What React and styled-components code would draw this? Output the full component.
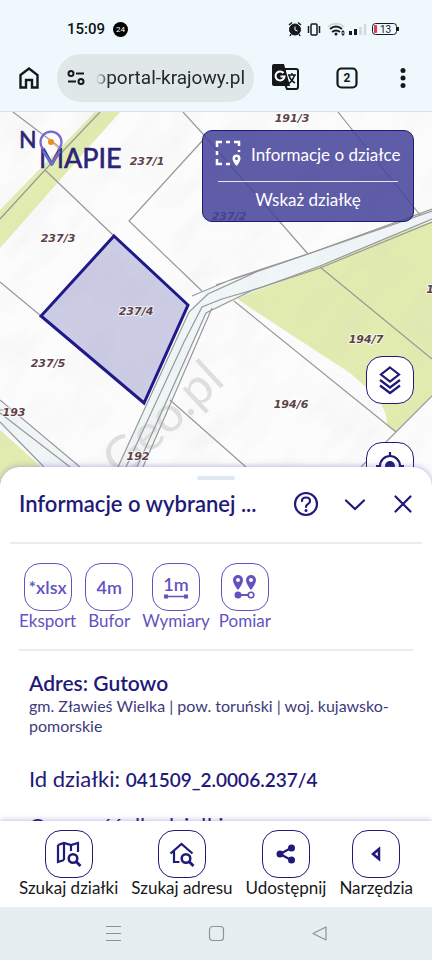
import styled, { createGlobalStyle } from "styled-components";

const NAVY = "#1f1a78";
const VIOLET = "#6253c0";

const GlobalStyle = createGlobalStyle`
  * {
    box-sizing: border-box;
  }
  body {
    margin: 0;
    background: #fff;
    color: ${NAVY};
    font-family: Lato, "Noto Sans", sans-serif;
  }
  button {
    font: inherit;
    color: inherit;
    padding: 0;
    border: none;
    background: none;
    cursor: pointer;
  }
  h1, h2, p {
    margin: 0;
  }
  svg {
    display: block;
  }
`;

const Screen = styled.div`
  display: flex;
  flex-direction: column;
  height: 100vh;
  overflow: hidden;
`;

const StatusBar = styled.div`
  display: flex;
  align-items: center;
  justify-content: space-between;
  height: 52px;
  padding: 6px 32px 0 67px;
  background: #eff9fd;
  color: #111;
`;

const StatusGroup = styled.div`
  display: flex;
  align-items: center;
  gap: 8px;
`;

const Clock = styled.time`
  font-family: Roboto, sans-serif;
  font-size: 15px;
  font-weight: 500;
`;

const Notification = styled.span`
  width: 15px;
  border-radius: 50%;
  background: #000;
  color: #fff;
  font-family: Roboto, sans-serif;
  font-size: 8px;
  line-height: 15px;
  text-align: center;
`;

const BrowserBar = styled.header`
  display: flex;
  align-items: center;
  height: 60px;
  padding: 0 20px 8px 18px;
  border-bottom: 1px solid #d3e3e8;
  background: #eff9fd;
  color: #14181a;
`;

const BrowserButton = styled.button`
  display: grid;
  place-items: center;
  flex: none;
`;

const AddressBar = styled.div`
  display: flex;
  align-items: center;
  flex: 1;
  gap: 8px;
  min-width: 0;
  height: 48px;
  margin: 0 18px 0 17px;
  padding: 0 9px 0 10px;
  border-radius: 24px;
  background: #e0e7e9;
`;

const AddressClip = styled.label`
  display: flex;
  flex: 1;
  min-width: 0;
  mask-image: linear-gradient(90deg, transparent 3px, #000 16px);
`;

const AddressInput = styled.input`
  flex: 1;
  min-width: 0;
  padding: 0;
  border: none;
  outline: none;
  background: none;
  color: #25292b;
  font-family: Roboto, sans-serif;
  font-size: 19px;
  line-height: 24px;
  text-align: right;
`;

const BrowserActions = styled.div`
  display: flex;
  align-items: center;
  gap: 36px;
`;

const Viewport = styled.main`
  display: grid;
  flex: 1;
  grid-template-rows: minmax(0, 1fr) minmax(0, 1fr);
  grid-template-columns: minmax(0, 1fr);
  min-height: 0;
  overflow: hidden;
`;

const MapCanvas = styled.svg`
  grid-area: 1 / 1 / 3 / 2;
  width: 100%;
  height: 100%;
`;

const MapLabel = styled.text`
  fill: #5e4148;
  stroke: #fff;
  stroke-width: 2px;
  stroke-opacity: 0.7;
  paint-order: stroke;
  font-family: "DejaVu Sans", sans-serif;
  font-size: 11px;
  font-style: italic;
  font-weight: bold;
  text-anchor: middle;
`;

const MapOverlay = styled.div`
  z-index: 1;
  display: flex;
  grid-area: 1 / 1 / 2 / 2;
  align-items: flex-start;
  justify-content: space-between;
  padding: 18px 18px 0;
`;

const OverlayRight = styled.div`
  display: flex;
  flex-direction: column;
  align-items: flex-end;
`;

const ModeCard = styled.section`
  width: 212px;
  padding: 7px 9px 11px 12px;
  border: 1px solid ${NAVY};
  border-radius: 10px;
  background: rgba(69, 65, 154, 0.86);
  color: #fff;
  font-size: 17px;
  text-align: center;
  white-space: nowrap;
`;

const ModeTitle = styled.div`
  display: flex;
  align-items: center;
  gap: 8px;
  height: 32px;
`;

const ModeHint = styled.p`
  margin: 11px 6px 0 3px;
  padding-top: 8px;
  border-top: 1px solid #e6e4f4;
  line-height: 20px;
`;

const MapButtons = styled.div`
  display: flex;
  flex-direction: column;
  gap: 38px;
  margin-top: 134px;
`;

const IconBox = styled.span`
  display: grid;
  place-items: center;
  width: 48px;
  height: 48px;
  border: 1px solid currentColor;
  border-radius: 16px;
  background: #fff;
  font-size: 18px;
  font-weight: 600;
`;

const Sheet = styled.section`
  z-index: 2;
  grid-area: 2 / 1 / 3 / 2;
  overflow: hidden;
  border-radius: 20px 20px 0 0;
  background: #fff;
  box-shadow: 0 0 6px rgba(98, 83, 192, 0.5);
`;

const Handle = styled.div`
  width: 38px;
  height: 4px;
  margin: 9px auto 0;
  border-radius: 2px;
  background: #dfe8f0;
`;

const SheetHeader = styled.header`
  display: flex;
  align-items: center;
  justify-content: space-between;
  height: 64px;
  margin: 0 10px;
  padding: 0 7px 14px 9px;
  border-bottom: 2px solid #ececf0;
`;

const SheetTitle = styled.h1`
  font-size: 22px;
  font-weight: 600;
  line-height: 28px;
  white-space: nowrap;
`;

const HeaderActions = styled.div`
  display: flex;
  align-items: center;
  gap: 24px;
`;

const Toolbar = styled.div`
  display: flex;
  gap: 9px;
  margin: 0 19px;
  padding: 19px 0 18px;
  border-bottom: 2px solid #ececf0;
  color: ${VIOLET};
`;

const Tool = styled.button`
  display: flex;
  flex-direction: column;
  align-items: center;
  font-size: 17px;
  line-height: 20px;
  white-space: nowrap;
`;

const Details = styled.div`
  padding: 19px 29px 0;
`;

const Address = styled.h2`
  font-size: 21px;
  font-weight: 600;
  line-height: 26px;
`;

const Region = styled.p`
  color: #3e3a7c;
  font-size: 16px;
  line-height: 20px;
`;

const DetailRow = styled.p`
  margin-top: 29px;
  font-size: 22px;
  line-height: 28px;
  white-space: nowrap;

  strong {
    font-size: 19px;
    font-weight: 600;
  }

  & + & {
    margin-top: 18px;
  }
`;

const BottomNav = styled.nav`
  z-index: 3;
  display: flex;
  justify-content: space-between;
  height: 86px;
  padding: 9px 19px 0;
  background: #fff;
  box-shadow: 0 0 6px rgba(98, 83, 192, 0.5);
`;

const NavItem = styled(Tool)`
  color: #18181c;

  ${IconBox} {
    color: ${NAVY};
  }
`;

const SystemBar = styled.footer`
  z-index: 3;
  display: flex;
  align-items: center;
  justify-content: center;
  gap: 86px;
  height: 53px;
  background: #e5eef1;
  color: #8c9497;
`;

const parcelLabels = [
  ["191/3", 292, 122],
  ["237/1", 147, 165],
  ["237/2", 229, 220],
  ["237/3", 58, 242],
  ["237/4", 136, 315],
  ["237/5", 48, 367],
  ["194/7", 366, 343],
  ["194/6", 291, 408],
  ["193", 14, 416],
  ["192", 138, 460],
  ["1", 430, 293],
];

function ParcelMap() {
  return (
    <MapCanvas viewBox="0 112 432 709" preserveAspectRatio="xMidYMin slice" role="img" aria-label="Mapa działek">
      <defs>
        <filter id="terrain" x="0" y="0" width="100%" height="100%">
          <feTurbulence type="fractalNoise" baseFrequency="0.016 0.04" numOctaves="3" seed="4" />
          <feColorMatrix values="0 0 0 0 0.5  0 0 0 0 0.5  0 0 0 0 0.52  0.5 0 0 0 -0.2" />
        </filter>
      </defs>
      <rect y="112" width="432" height="709" fill="#fcfcfc" />
      <g fill="#e2ecb0">
        <path d="M95 112H120L0 248V210Z" />
        <path d="M0 430L45 470V500H0Z" />
        <path d="M236 298Q250 286 270 280L432 221V396L396 432L387 426Q388 412 376 396L350 373L246 305Z" />
      </g>
      <path
        d="M118 467L190 310L205 291L308 254L432 209V219L320 266L225 303L207 313L143 467Z"
        fill="#f0f6f8"
      />
      <path d="M0 402L78 467H44L0 426Z" fill="#f0f6f8" />
      <rect x="-300" y="0" width="1100" height="900" filter="url(#terrain)" opacity="0.4" transform="rotate(-48 216 300)" />
      <text
        x="122"
        y="480"
        transform="rotate(-43 122 480)"
        fill="#dedede"
        fontFamily="Lato, sans-serif"
        fontSize="50"
      >
        Geo.pl
      </text>
      <g fill="none" stroke="#989898" strokeWidth="1.2">
        <path d="M13 112L62 149M100 112L45 170L0 219M45 170L114 236M0 282L41 316" />
        <path d="M183 112L203 134L308 254M203 140L129 221L202 291M338 112L420 215" />
        <path d="M192 296L235 278L308 254L432 209M216 285L258 271M320 267L432 359" />
        <path d="M118 467L189 312L208 294L256 272L432 211" />
        <path d="M126 467L184 342L202 307L222 299L260 288L320 266L432 219" />
        <path d="M137 467L206 313L253 290L320 268L432 222M143 467L212 308" />
        <path d="M170 400L246 467M234 301L396 432M432 396L361 467" />
        <path d="M0 400L80 467M0 413L70 467M0 422L44 467M0 410L8 410" />
      </g>
      <path d="M114 236L188 305L144 403L41 316Z" fill="#3b35a0" fillOpacity="0.24" stroke="#20198a" strokeWidth="3" />
      {parcelLabels.map(([name, x, y]) => (
        <MapLabel key={name} x={x} y={y}>
          {name}
        </MapLabel>
      ))}
    </MapCanvas>
  );
}

function Logo() {
  return (
    <svg width="112" height="44" viewBox="0 0 112 44" role="img" aria-label="No mapie">
      <g fill="#2a2479" stroke="#2a2479" strokeWidth="0.6" fontFamily="Lato, sans-serif">
        <text x="1" y="18" fontSize="23">N</text>
        <text x="21" y="38" fontSize="27">MAPIE</text>
      </g>
      <path d="M26 20A10.500 10.500 0 1 1 40 20" fill="none" stroke="#7568cf" strokeWidth="2.200" />
      <path d="M25 21L33.500 34L42 21" fill="none" stroke="#7568cf" strokeWidth="2.600" />
      <path d="M33 12L40 18" stroke="#f0b070" strokeWidth="1" />
      <circle cx="33" cy="12" r="3" fill="#f08b1d" />
    </svg>
  );
}

function ParcelIcon() {
  return (
    <svg width="28" height="28" viewBox="0 0 28 28" fill="none" stroke="#fff" strokeWidth="2.500">
      <path d="M2 7V2H7M11 2H15M19 2H24V6M2 11V15M2 19V24H7M11 24H15M24 10V12" />
      <path
        d="M21.500 14.500A4 4 0 0 0 17.500 18.500C17.500 21.500 21.500 26 21.500 26S25.500 21.500 25.500 18.500A4 4 0 0 0 21.500 14.500ZM21.500 17A1.500 1.500 0 1 1 21.500 20A1.500 1.500 0 0 1 21.500 17Z"
        fill="#fff"
        fillRule="evenodd"
        stroke="none"
      />
    </svg>
  );
}

function StatusIcons() {
  return (
    <svg width="112" height="16" viewBox="0 0 112 16" fill="none" stroke="#171a1c" role="img" aria-label="Bateria 13%">
      <circle cx="7" cy="8.500" r="5.500" fill="#171a1c" />
      <path d="M1 4L4 1.500M13 4L10 1.500M3 13L2 15M11 13L12 15" strokeWidth="1.500" />
      <path d="M7 5.500V9L9.500 10" stroke="#fff" />
      <rect x="23" y="3" width="6" height="11" rx="1" strokeWidth="1.500" />
      <path d="M20.500 5V12M31.500 5V12" strokeWidth="1.500" />
      <path d="M40 6Q48 -1 56 6" stroke="#d3d9db" strokeWidth="2" />
      <path d="M42 8Q48 3 54 8M44 11Q48 8 52 11" strokeWidth="2" />
      <circle cx="48" cy="13" r="1.500" fill="#171a1c" stroke="none" />
      <path d="M53 11.500L55 9L57 11.500ZM53 12.500L55 15L57 12.500Z" fill="#171a1c" stroke="none" />
      <path d="M62.500 10V14M67.500 8V14" strokeWidth="3" />
      <path d="M72.500 6V14M77 3V14" stroke="#d3d9db" strokeWidth="2.500" />
      <rect x="84.500" y="2.500" width="24" height="11" rx="3" />
      <path d="M110 6V10" strokeWidth="2" />
      <rect x="86" y="4" width="3" height="8" rx="1" fill="#e23a4c" stroke="none" />
      <text x="92" y="12" fill="#171a1c" stroke="none" fontFamily="Roboto, sans-serif" fontSize="10">13</text>
    </svg>
  );
}

function TranslateIcon() {
  return (
    <svg width="28" height="28" viewBox="0 0 28 28">
      <path d="M13 5H24Q26 5 26 7V23Q26 25 24 25H15L13 20Z" fill="none" stroke="#14181a" strokeWidth="2" />
      <path d="M16 11H24M20 9V11M17 11Q18 16 23 19M22.500 11Q21 17 16 20" fill="none" stroke="#14181a" strokeWidth="1.500" />
      <path d="M2 0H12L18 22H2Q0 22 0 20V2Q0 0 2 0Z" fill="#14181a" />
      <path d="M11.500 9A4.500 4.500 0 1 0 12.500 12.500H8.500" fill="none" stroke="#fff" strokeWidth="2" />
    </svg>
  );
}

function LayersIcon() {
  return (
    <svg width="24" height="30" viewBox="0 0 24 30" fill="none" stroke="currentColor" strokeWidth="2.200">
      <path d="M12 2.500L21 9.500L12 16.500L3 9.500ZM2 15L12 22.500L22 15M2 20.500L12 28L22 20.500" />
    </svg>
  );
}

function LocateIcon() {
  return (
    <svg width="28" height="28" viewBox="0 0 28 28" fill="none" stroke="currentColor" strokeWidth="2.200">
      <circle cx="14" cy="14" r="10" />
      <circle cx="14" cy="14" r="5" fill="currentColor" stroke="none" />
      <path d="M14 0V5M14 23V28M0 14H5M23 14H28" />
    </svg>
  );
}

function DimensionIcon() {
  return (
    <svg width="28" height="26" viewBox="0 0 28 26">
      <text x="14" y="17" fill="currentColor" fontSize="18" textAnchor="middle">1m</text>
      <path d="M3 22.500H25" stroke="currentColor" strokeWidth="1.500" />
      <path d="M2 20.500H6V24.500H2ZM22 20.500H26V24.500H22Z" fill="currentColor" />
    </svg>
  );
}

function MeasureIcon() {
  const pin = "M5 0A5 5 0 0 0 0 5C0 9 5 15 5 15S10 9 10 5A5 5 0 0 0 5 0ZM5 3A2 2 0 1 1 5 7A2 2 0 0 1 5 3Z";
  return (
    <svg width="26" height="26" viewBox="0 0 26 26" fill="currentColor" fillRule="evenodd">
      <path d={pin} transform="translate(1 1)" />
      <path d={pin} transform="translate(14 1)" />
      <circle cx="6" cy="21" r="3.500" />
      <path d="M6 21H16" stroke="currentColor" strokeWidth="2" />
      <circle cx="19" cy="21" r="2.800" fill="none" stroke="currentColor" strokeWidth="1.600" />
    </svg>
  );
}

function MapSearchIcon() {
  return (
    <svg width="26" height="26" viewBox="0 0 26 26" fill="none" stroke="currentColor" strokeWidth="2.200">
      <path d="M2 4L8 2L15 4L22 2V11M2 4V21L8 19M8 2V19M15 4V10" />
      <circle cx="17" cy="17.500" r="4.300" strokeWidth="2.500" />
      <path d="M20 20.500L24.500 25" strokeWidth="2.800" />
    </svg>
  );
}

function HomeSearchIcon() {
  return (
    <svg width="26" height="26" viewBox="0 0 26 26" fill="none" stroke="currentColor" strokeWidth="2.200">
      <path d="M1.500 12.500L12.500 3L23.500 12.500M5 10V21H10.500" />
      <circle cx="17" cy="17.500" r="4.300" strokeWidth="2.500" />
      <path d="M20 20.500L24.500 25" strokeWidth="2.800" />
    </svg>
  );
}

function ShareIcon() {
  return (
    <svg width="20" height="20" viewBox="0 0 20 20" fill="currentColor">
      <path d="M15 4L4 10L15 16" fill="none" stroke="currentColor" strokeWidth="2.200" />
      <circle cx="15.500" cy="4" r="3.500" />
      <circle cx="4" cy="10" r="3.500" />
      <circle cx="15.500" cy="16" r="3.500" />
    </svg>
  );
}

function CaretIcon() {
  return (
    <svg width="12" height="18" viewBox="0 0 12 18" fill="none" stroke="currentColor" strokeWidth="2.500">
      <path d="M9 4V14L3 9Z" />
    </svg>
  );
}

const tools = [
  { label: "Eksport", icon: "*xlsx" },
  { label: "Bufor", icon: "4m" },
  { label: "Wymiary", icon: <DimensionIcon /> },
  { label: "Pomiar", icon: <MeasureIcon /> },
];

const navItems = [
  { label: "Szukaj działki", icon: <MapSearchIcon /> },
  { label: "Szukaj adresu", icon: <HomeSearchIcon /> },
  { label: "Udostępnij", icon: <ShareIcon /> },
  { label: "Narzędzia", icon: <CaretIcon /> },
];

export default function App() {
  return (
    <Screen>
      <GlobalStyle />
      <StatusBar>
        <StatusGroup>
          <Clock>15:09</Clock>
          <Notification>24</Notification>
        </StatusGroup>
        <StatusIcons />
      </StatusBar>
      <BrowserBar>
        <BrowserButton aria-label="Strona główna">
          <svg width="22" height="24" viewBox="0 0 22 24" fill="none" stroke="currentColor" strokeWidth="2.400">
            <path d="M2.500 9L11 2.500L19.500 9V21.500H14V14H8V21.500H2.500Z" />
          </svg>
        </BrowserButton>
        <AddressBar>
          <svg width="18" height="18" viewBox="0 0 18 18" fill="none" stroke="currentColor" strokeWidth="2">
            <circle cx="4" cy="4.500" r="2.500" />
            <circle cx="14" cy="12.500" r="2.500" />
            <path d="M9 4.500H17M1 12.500H9" />
          </svg>
          <AddressClip>
            <AddressInput aria-label="Adres strony" defaultValue="oportal-krajowy.pl" />
          </AddressClip>
        </AddressBar>
        <BrowserActions>
          <BrowserButton aria-label="Tłumacz">
            <TranslateIcon />
          </BrowserButton>
          <BrowserButton aria-label="Karty">
            <svg width="22" height="22" viewBox="0 0 22 22">
              <rect x="1.500" y="1.500" width="19" height="19" rx="4" fill="none" stroke="currentColor" strokeWidth="2.200" />
              <text x="11" y="15" fill="currentColor" fontFamily="Roboto, sans-serif" fontSize="12" fontWeight="700" textAnchor="middle">2</text>
            </svg>
          </BrowserButton>
          <BrowserButton aria-label="Menu">
            <svg width="18" height="22" viewBox="0 0 18 22" fill="currentColor">
              <circle cx="9" cy="3.500" r="2.500" />
              <circle cx="9" cy="11" r="2.500" />
              <circle cx="9" cy="18.500" r="2.500" />
            </svg>
          </BrowserButton>
        </BrowserActions>
      </BrowserBar>
      <Viewport>
        <ParcelMap />
        <MapOverlay>
          <Logo />
          <OverlayRight>
            <ModeCard>
              <ModeTitle>
                <ParcelIcon />
                Informacje o działce
              </ModeTitle>
              <ModeHint>Wskaż działkę</ModeHint>
            </ModeCard>
            <MapButtons>
              <button aria-label="Warstwy">
                <IconBox>
                  <LayersIcon />
                </IconBox>
              </button>
              <button aria-label="Lokalizacja">
                <IconBox>
                  <LocateIcon />
                </IconBox>
              </button>
            </MapButtons>
          </OverlayRight>
        </MapOverlay>
        <Sheet>
          <Handle />
          <SheetHeader>
            <SheetTitle>Informacje o wybranej ...</SheetTitle>
            <HeaderActions>
              <button aria-label="Pomoc">
                <svg width="26" height="26" viewBox="0 0 26 26" fill="none" stroke="currentColor" strokeWidth="2.200">
                  <circle cx="13" cy="13" r="11" />
                  <path d="M9 10Q9 6.500 13 6.500T17 10Q17 12 15 13T13 16" strokeLinecap="round" />
                  <circle cx="13" cy="19.500" r="1.500" fill="currentColor" stroke="none" />
                </svg>
              </button>
              <button aria-label="Zwiń">
                <svg width="24" height="24" viewBox="0 0 24 24" fill="none" stroke="currentColor" strokeWidth="2.200" strokeLinecap="round">
                  <path d="M3 8.500L12 17L21 8.500" />
                </svg>
              </button>
              <button aria-label="Zamknij">
                <svg width="24" height="24" viewBox="0 0 24 24" fill="none" stroke="currentColor" strokeWidth="2.200" strokeLinecap="round">
                  <path d="M4.500 4.500L19.500 19.500M19.500 4.500L4.500 19.500" />
                </svg>
              </button>
            </HeaderActions>
          </SheetHeader>
          <Toolbar>
            {tools.map((tool) => (
              <Tool key={tool.label}>
                <IconBox>{tool.icon}</IconBox>
                {tool.label}
              </Tool>
            ))}
          </Toolbar>
          <Details>
            <Address>Adres: Gutowo</Address>
            <Region>gm. Zławieś Wielka | pow. toruński | woj. kujawsko-pomorskie</Region>
            <DetailRow>
              Id działki: <strong>041509_2.0006.237/4</strong>
            </DetailRow>
            <DetailRow>Czynność dla działki</DetailRow>
          </Details>
        </Sheet>
      </Viewport>
      <BottomNav>
        {navItems.map((item) => (
          <NavItem key={item.label}>
            <IconBox>{item.icon}</IconBox>
            {item.label}
          </NavItem>
        ))}
      </BottomNav>
      <SystemBar>
        <svg width="17" height="17" viewBox="0 0 17 17" stroke="currentColor" strokeWidth="1.200">
          <path d="M1 1.500H16M1 8.500H16M1 15.500H16" />
        </svg>
        <svg width="17" height="17" viewBox="0 0 17 17" fill="none" stroke="currentColor" strokeWidth="1.200">
          <rect x="1.500" y="1.500" width="14" height="14" rx="3" />
        </svg>
        <svg width="17" height="17" viewBox="0 0 17 17" fill="none" stroke="currentColor" strokeWidth="1.200" strokeLinejoin="round">
          <path d="M15 2V15L2 8.500Z" />
        </svg>
      </SystemBar>
    </Screen>
  );
}
